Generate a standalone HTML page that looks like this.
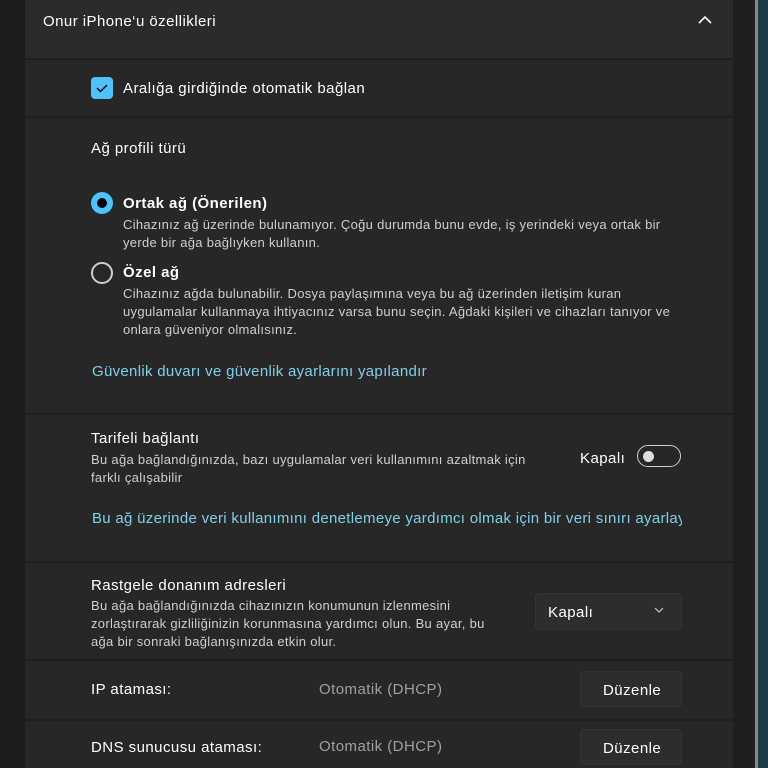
<!DOCTYPE html><html><head><meta charset="utf-8"><style>
body{margin:0;width:768px;height:768px;overflow:hidden;background:#1c1c1c;font-family:"Segoe UI","Liberation Sans",sans-serif;color:#fff;position:relative}
.a{position:absolute}
.t{font-size:15px;color:#fff;white-space:nowrap;letter-spacing:0.45px}
.s{font-size:13px;color:#cfcfcf;line-height:18px;letter-spacing:0.3px}
.l{color:#7fd0e8;font-size:15px;white-space:nowrap;letter-spacing:0.3px}
.btn{background:#2d2d2d;border-radius:4px;border:1px solid #333;box-sizing:border-box}
</style></head><body>
<div class="a" style="left:25px;top:0;width:708px;height:768px;background:#272727"></div>
<div class="a" style="left:25px;top:0;width:708px;height:58px;background:#2b2b2b"></div>
<div class="a" style="left:733px;top:0;width:22px;height:768px;background:#1f1f1f"></div>
<div class="a" style="left:755px;top:0;width:3px;height:768px;background:#888"></div>
<div class="a" style="left:758px;top:0;width:10px;height:768px;background:#1d3c44"></div>
<div class="a" style="left:25px;top:58px;width:708px;height:2px;background:#1f1f1f"></div>
<div class="a" style="left:25px;top:116px;width:708px;height:2px;background:#1f1f1f"></div>
<div class="a" style="left:25px;top:413px;width:708px;height:2px;background:#1f1f1f"></div>
<div class="a" style="left:25px;top:561px;width:708px;height:2px;background:#1f1f1f"></div>
<div class="a" style="left:25px;top:659px;width:708px;height:2px;background:#1f1f1f"></div>
<div class="a" style="left:25px;top:719px;width:708px;height:2px;background:#1f1f1f"></div>
<div class="a t" style="left:43px;top:13px">Onur iPhone‘u özellikleri</div>
<svg class="a" style="left:698px;top:15px" width="14" height="10"><path d="M1 8 L7 2 L13 8" stroke="#fff" stroke-width="1.6" fill="none"/></svg>
<div class="a" style="left:91px;top:77px;width:22px;height:22px;background:#4cc2ff;border-radius:4px"></div>
<svg class="a" style="left:95px;top:82px" width="14" height="12"><path d="M2 6 L5.5 9.5 L12 3" stroke="#000" stroke-width="1.5" fill="none"/></svg>
<div class="a t" style="left:123px;top:80px">Aralığa girdiğinde otomatik bağlan</div>
<div class="a t" style="left:91px;top:140px">Ağ profili türü</div>
<div class="a" style="left:91px;top:192px;width:22px;height:22px;border-radius:50%;background:#4cc2ff"></div>
<div class="a" style="left:97px;top:198px;width:10px;height:10px;border-radius:50%;background:#000"></div>
<div class="a t" style="left:123px;top:195px;font-weight:bold">Ortak ağ (Önerilen)</div>
<div class="a s" style="left:123px;top:216px;width:560px">Cihazınız ağ üzerinde bulunamıyor. Çoğu durumda bunu evde, iş yerindeki veya ortak bir yerde bir ağa bağlıyken kullanın.</div>
<div class="a" style="left:91px;top:262px;width:18px;height:18px;border-radius:50%;border:2px solid #cfcfcf"></div>
<div class="a t" style="left:123px;top:264px;font-weight:bold">Özel ağ</div>
<div class="a s" style="left:123px;top:285px;width:560px">Cihazınız ağda bulunabilir. Dosya paylaşımına veya bu ağ üzerinden iletişim kuran uygulamalar kullanmaya ihtiyacınız varsa bunu seçin. Ağdaki kişileri ve cihazları tanıyor ve onlara güveniyor olmalısınız.</div>
<div class="a l" style="left:92px;top:363px">Güvenlik duvarı ve güvenlik ayarlarını yapılandır</div>
<div class="a t" style="left:91px;top:430px">Tarifeli bağlantı</div>
<div class="a s" style="left:91px;top:451px;width:450px">Bu ağa bağlandığınızda, bazı uygulamalar veri kullanımını azaltmak için farklı çalışabilir</div>
<div class="a t" style="left:580px;top:450px">Kapalı</div>
<div class="a" style="left:637px;top:445px;width:42px;height:20px;border:1.5px solid #cfcfcf;border-radius:12px"></div>
<div class="a" style="left:643px;top:451px;width:11px;height:11px;border-radius:50%;background:#ddd"></div>
<div class="a l" style="left:92px;top:510px;width:590px;overflow:hidden">Bu ağ üzerinde veri kullanımını denetlemeye yardımcı olmak için bir veri sınırı ayarlayın</div>
<div class="a t" style="left:91px;top:577px">Rastgele donanım adresleri</div>
<div class="a s" style="left:91px;top:597px;width:410px">Bu ağa bağlandığınızda cihazınızın konumunun izlenmesini zorlaştırarak gizliliğinizin korunmasına yardımcı olun. Bu ayar, bu ağa bir sonraki bağlanışınızda etkin olur.</div>
<div class="a btn" style="left:535px;top:593px;width:147px;height:37px"></div>
<div class="a t" style="left:548px;top:604px">Kapalı</div>
<svg class="a" style="left:654px;top:607px" width="10" height="7"><path d="M1 1 L5 5 L9 1" stroke="#ccc" stroke-width="1.2" fill="none"/></svg>
<div class="a t" style="left:91px;top:681px">IP ataması:</div>
<div class="a t" style="left:319px;top:681px;color:#a0a0a0">Otomatik (DHCP)</div>
<div class="a btn" style="left:580px;top:671px;width:102px;height:36px"></div>
<div class="a t" style="left:603px;top:682px">Düzenle</div>
<div class="a t" style="left:91px;top:739px">DNS sunucusu ataması:</div>
<div class="a t" style="left:319px;top:738px;color:#a0a0a0">Otomatik (DHCP)</div>
<div class="a btn" style="left:580px;top:729px;width:102px;height:36px"></div>
<div class="a t" style="left:603px;top:740px">Düzenle</div>
</body></html>
